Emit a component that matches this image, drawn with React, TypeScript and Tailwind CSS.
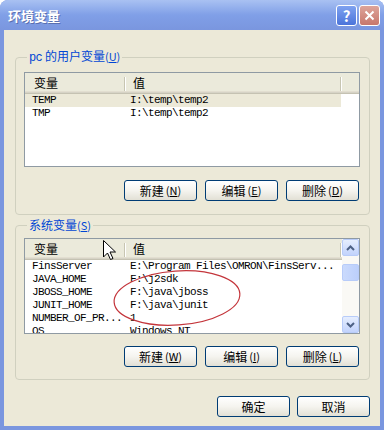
type Row = { name: string; value: string };

const USER_VARS: Row[] = [
  { name: 'TEMP', value: 'I:\\temp\\temp2' },
  { name: 'TMP', value: 'I:\\temp\\temp2' },
];

const SYSTEM_VARS: Row[] = [
  { name: 'FinsServer', value: 'E:\\Program Files\\OMRON\\FinsServ...' },
  { name: 'JAVA_HOME', value: 'F:\\j2sdk' },
  { name: 'JBOSS_HOME', value: 'F:\\java\\jboss' },
  { name: 'JUNIT_HOME', value: 'F:\\java\\junit' },
  { name: 'NUMBER_OF_PR...', value: '1' },
  { name: 'OS', value: 'Windows_NT' },
];

function XpButton({ label, hotkey }: { label: string; hotkey?: string }) {
  return (
    <button className="flex h-[21px] w-[73px] items-center justify-center rounded-[3px] border border-[#003C74] bg-gradient-to-b from-white via-[#F5F4EF] to-[#E2E0D5] text-[12px] leading-none text-black">
      <span>{label}</span>
      {hotkey && (
        <span className="ml-[2px] text-[11px]">
          (<span className="underline">{hotkey}</span>)
        </span>
      )}
    </button>
  );
}

function Divider() {
  return <div className="h-[14px] w-[2px] border-l border-r border-l-[#C7C5B2] border-r-white" />;
}

function Arrow({ up }: { up?: boolean }) {
  return (
    <svg width="9" height="6" viewBox="0 0 9 6">
      <path
        d={up ? 'M1 5 L4.5 1.5 L8 5' : 'M1 1 L4.5 4.5 L8 1'}
        fill="none"
        stroke="#4D6185"
        strokeWidth="2"
      />
    </svg>
  );
}

function ScrollBar() {
  return (
    <div className="flex w-[17px] flex-col bg-[#FAF9F5]">
      <div className="flex h-[17px] items-center justify-center rounded-[2px] border border-[#B8CCF9] bg-gradient-to-b from-[#E6EEFE] to-[#C2D3FC]">
        <Arrow up />
      </div>
      <div className="mt-[8px] h-[17px] rounded-[2px] border border-[#B8CCF9] bg-gradient-to-r from-[#CADAFD] to-[#BCCFFB]" />
      <div className="flex-1" />
      <div className="flex h-[17px] items-center justify-center rounded-[2px] border border-[#B8CCF9] bg-gradient-to-b from-[#E6EEFE] to-[#C2D3FC]">
        <Arrow />
      </div>
    </div>
  );
}

function ListView({
  rows,
  className,
  selected,
  scrollbar,
}: {
  rows: Row[];
  className: string;
  selected?: number;
  scrollbar?: boolean;
}) {
  return (
    <div className={`flex overflow-hidden border border-[#8F9AA3] bg-white ${className}`}>
      <div className="flex min-w-0 flex-1 flex-col">
        <div className="flex h-[21px] shrink-0 items-center bg-[#EBEADB] text-[12px] shadow-[inset_0_-1px_0_#C5C2B2,inset_0_-2px_0_#D6D3C6,inset_0_-3px_0_#E2DED0]">
          <div className="w-[99px] pl-[9px] pb-[2px]">变量</div>
          <Divider />
          <div className="w-[214px] pl-[7px] pb-[2px]">值</div>
          <Divider />
        </div>
        <div className="font-['Liberation_Mono',monospace] text-[11px] tracking-[-0.6px] text-black">
          {rows.map((r, i) => (
            <div
              key={r.name}
              className={`flex h-[13px] w-[316px] items-center whitespace-nowrap leading-none ${
                i === selected ? 'bg-[#ECE9D8]' : ''
              }`}
            >
              <div className="w-[105px] pl-[7px]">{r.name}</div>
              <div>{r.value}</div>
            </div>
          ))}
        </div>
      </div>
      {scrollbar && <ScrollBar />}
    </div>
  );
}

export default function App() {
  return (
    <div className="relative flex h-[430px] w-[384px] flex-col overflow-hidden rounded-t-[8px] bg-[#7A96DF] font-['Noto_Sans_CJK_SC',sans-serif] text-black">
      <div className="flex h-[30px] shrink-0 items-center bg-gradient-to-b from-[#A9C1F2] via-[#809FE7] to-[#7A96DF] pl-[8px] pr-[4px]">
        <span className="flex-1 text-[13px] font-bold leading-none text-white [text-shadow:1px_1px_0_#5A6FB0]">
          环境变量
        </span>
        <div className="flex h-[21px] w-[21px] items-center justify-center rounded-[3px] border border-white bg-gradient-to-b from-[#7FA2F0] to-[#4C74DA] text-[15px] font-bold leading-none text-white">
          ?
        </div>
        <div className="ml-[2px] flex h-[21px] w-[21px] items-center justify-center rounded-[3px] border border-white bg-gradient-to-b from-[#DDA49A] to-[#C7776C]">
          <svg width="11" height="11" viewBox="0 0 11 11">
            <path d="M1.5 1.5 L9.5 9.5 M9.5 1.5 L1.5 9.5" stroke="white" strokeWidth="2" />
          </svg>
        </div>
      </div>

      <div className="mx-[4px] mb-[4px] flex flex-1 flex-col bg-[#ECE9D8] pl-[11px] pr-[10px] pt-[19px]">
        <fieldset className="rounded-[4px] border border-[#D0D0BF] pb-[13px] pl-[8px] pr-[9px] pt-[7px]">
          <legend className="ml-[3px] px-[2px] text-[12px] leading-[14px] text-[#0046D5]">
            <span className="font-['Liberation_Mono',monospace] tracking-[-0.6px]">pc</span> 的用户变量
            <span className="text-[11px]">(<span className="underline">U</span>)</span>
          </legend>
          <ListView rows={USER_VARS} className="h-[95px]" selected={0} />
          <div className="mt-[13px] flex justify-end gap-[8px] pr-[1px]">
            <XpButton label="新建" hotkey="N" />
            <XpButton label="编辑" hotkey="E" />
            <XpButton label="删除" hotkey="D" />
          </div>
        </fieldset>

        <fieldset className="mt-[3px] rounded-[4px] border border-[#D0D0BF] pb-[12px] pl-[8px] pr-[9px] pt-[6px]">
          <legend className="ml-[3px] px-[2px] text-[12px] leading-[14px] text-[#0046D5]">
            系统变量<span className="text-[11px]">(<span className="underline">S</span>)</span>
          </legend>
          <ListView rows={SYSTEM_VARS} className="h-[96px]" scrollbar />
          <div className="mt-[12px] flex justify-end gap-[8px] pr-[1px]">
            <XpButton label="新建" hotkey="W" />
            <XpButton label="编辑" hotkey="I" />
            <XpButton label="删除" hotkey="L" />
          </div>
        </fieldset>

        <div className="mt-[16px] flex justify-end gap-[7px]">
          <XpButton label="确定" />
          <XpButton label="取消" />
        </div>
      </div>

      <svg className="pointer-events-none absolute left-0 top-0" width="384" height="430">
        <ellipse
          cx="177"
          cy="298"
          rx="63"
          ry="27"
          transform="rotate(-4 177 298)"
          fill="none"
          stroke="#C4363C"
          strokeWidth="1.2"
        />
        <path
          d="M103.5 240.5 L103.5 257 L107.5 253 L110.5 259.5 L113 258.5 L110 252 L115.5 252 Z"
          fill="white"
          stroke="black"
          strokeWidth="1"
        />
      </svg>
    </div>
  );
}
